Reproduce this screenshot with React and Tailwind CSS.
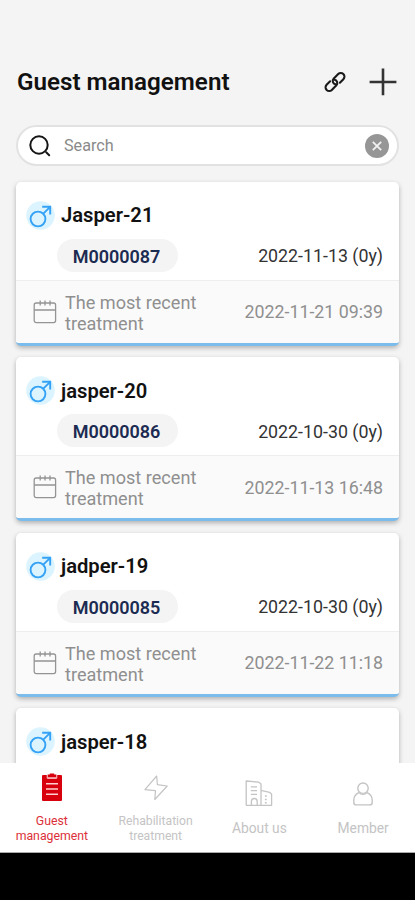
import React from "react";

const guests = [
  { name: "Jasper-21", id: "M0000087", born: "2022-11-13 (0y)", last: "2022-11-21 09:39" },
  { name: "jasper-20", id: "M0000086", born: "2022-10-30 (0y)", last: "2022-11-13 16:48" },
  { name: "jadper-19", id: "M0000085", born: "2022-10-30 (0y)", last: "2022-11-22 11:18" },
  { name: "jasper-18" },
];

function LinkIcon() {
  return (
    <svg width="24" height="24" viewBox="0 0 24 24" fill="none" stroke="#1a1a1a" strokeWidth="2.1" strokeLinecap="round">
      <path d="M12.6 14.2a3.2 3.2 0 0 1-2-5.4l4.6-4.7a3.6 3.6 0 0 1 5.2 5.1l-3.5 3.5" />
      <path d="M11.4 9.8a3.2 3.2 0 0 1 2 5.4l-4.6 4.7a3.6 3.6 0 0 1-5.2-5.1l3.5-3.5" />
    </svg>
  );
}

function PlusIcon() {
  return (
    <svg width="28" height="28" viewBox="0 0 28 28" fill="none" stroke="#333" strokeWidth="2.6">
      <path d="M14 .6v26.6M.6 14h26.8" />
    </svg>
  );
}

function SearchIcon() {
  return (
    <svg width="22" height="22" viewBox="0 0 22 22" fill="none" stroke="#151515" strokeWidth="2" strokeLinecap="round">
      <circle cx="10" cy="10" r="8.7" />
      <path d="m17.2 17.2 3 3" />
    </svg>
  );
}

function MaleIcon() {
  return (
    <svg width="29" height="29" viewBox="0 0 29 29" fill="none" stroke="#35a2f5" strokeWidth="1.9">
      <circle cx="14.5" cy="14.5" r="14.3" fill="#dbf4ff" stroke="none" />
      <circle cx="12" cy="18" r="7.4" />
      <path d="m17.3 12.7 6.6-6.6M16.2 5.8h8v7.6" />
    </svg>
  );
}

function CalendarIcon() {
  return (
    <svg width="24" height="24" viewBox="0 0 24 24" fill="none" stroke="#949494" strokeWidth="1.3">
      <rect x="1.2" y="3" width="21.4" height="19.6" rx="2" />
      <path d="M1.2 10h21.4M7.2.5v5M12 .5v5M17 .5v5" />
    </svg>
  );
}

function ClipboardIcon() {
  return (
    <svg width="20" height="28" viewBox="0 0 20 28">
      <path d="M1 2h4.5v3.4h9V2H19a1 1 0 0 1 1 1v24a1 1 0 0 1-1 1H1a1 1 0 0 1-1-1V3a1 1 0 0 1 1-1Z" fill="#d8000c" />
      <path d="M5.6 1.6h2.2V.4h4.4v1.2h2.2v3H5.6z" fill="#d8000c" />
      <path d="M5.2 2v3.2h9.6V2" fill="none" stroke="#ffc4c4" strokeWidth=".9" />
      <path d="M4 10.7h12M4 16h12M4 21.3h12" stroke="#ffd0d0" strokeWidth="1.4" />
    </svg>
  );
}

function BoltIcon() {
  return (
    <svg width="24" height="26" viewBox="0 0 24 26" fill="none" stroke="#c4c4c4" strokeWidth="1.2" strokeLinejoin="round">
      <path d="M12.7 1 .9 14.6l10.6 1.1-.7 8.8L23.2 11l-9.8-1.4Z" />
    </svg>
  );
}

function BuildingIcon() {
  return (
    <svg width="28" height="27" viewBox="0 0 28 27" fill="none" stroke="#c4c4c4" strokeWidth="1.3" strokeLinejoin="round">
      <path d="M1.2 25.3V1l12.6 1.2 2.2 1.7v21.4M16 10.3l8.6 2 2 1.9v11.1H1" />
      <path d="M5.8 6.8H12M5.8 10.6H12M5.8 14.4H12M6.4 25v-3.6a2.9 2.9 0 0 1 5.8 0V25" />
      <path d="M20.8 15.2v1.5M20.8 18.7v1.5M20.8 22.1v1.5" strokeWidth="1.8" />
    </svg>
  );
}

function MemberIcon() {
  return (
    <svg width="20" height="24" viewBox="0 0 20 24" fill="none" stroke="#c4c4c4" strokeWidth="1.4">
      <circle cx="10" cy="6.2" r="5.2" />
      <path d="M6 10.6C2.6 12 .8 14.6.8 18v2.4a2.5 2.5 0 0 0 2.5 2.5h13.4a2.5 2.5 0 0 0 2.5-2.5V18c0-3.4-1.8-6-5.2-7.4-2.2 2.4-5.8 2.4-8 0Z" />
    </svg>
  );
}

function GuestCard({ guest }) {
  return (
    <article className="flex h-[164px] shrink-0 flex-col overflow-hidden rounded-[5px] border-b-[3px] border-[#7bbcec] bg-white shadow-[0_2px_5px_rgba(0,0,0,0.28)]">
      <div className="flex h-[98px] flex-col pt-[18px]">
        <div className="flex h-[31px] items-center pl-[10px]">
          <MaleIcon />
          <span className="ml-[6px] pt-px text-[20.2px] leading-none font-semibold text-[#111]">{guest.name}</span>
        </div>
        {guest.id && (
          <div className="mt-2 flex h-[33px] items-center justify-between pr-4 pl-[41px]">
            <span className="flex h-[33px] w-[121px] items-center justify-center rounded-full bg-[#f4f4f4] pt-[2px] pr-[2px] text-[18px] font-semibold text-[#1c2b52]">
              {guest.id}
            </span>
            <span className="pt-[3px] text-[17.8px] text-[#333]">{guest.born}</span>
          </div>
        )}
      </div>
      {guest.last && (
        <div className="flex flex-1 items-center border-t border-[#eeeeee] bg-[#fafafa] pr-4 pl-[17px] text-[#8f8f8f]">
          <CalendarIcon />
          <span className="ml-2 w-[150px] pt-[2px] text-[18.1px] leading-[21px]">The most recent treatment</span>
          <span className="ml-auto pt-[2px] text-[17.8px] whitespace-nowrap">{guest.last}</span>
        </div>
      )}
    </article>
  );
}

export default function App() {
  return (
    <div className="flex h-[900px] w-[415px] flex-col overflow-hidden bg-[#f4f4f4] font-['Roboto',sans-serif]">
      <main className="flex h-[763px] shrink-0 flex-col overflow-hidden px-4 pt-[62px]">
        <header className="flex h-10 shrink-0 items-center justify-between pr-[2px] pl-px">
          <h1 className="text-[24.2px] leading-none font-semibold text-[#111]">Guest management</h1>
          <div className="flex items-center gap-[22px]">
            <LinkIcon />
            <PlusIcon />
          </div>
        </header>
        <div className="mt-[23px] flex h-[41px] shrink-0 items-center rounded-full border-2 border-[#e2e2e2] bg-white pr-2 pl-[11px]">
          <SearchIcon />
          <span className="ml-[13px] pt-[2px] text-[16.2px] text-[#8a8a8a]">Search</span>
          <span className="ml-auto flex size-6 items-center justify-center rounded-full bg-[#969696]">
            <svg width="10" height="10" viewBox="0 0 10 10" stroke="#f2f2f2" strokeWidth="1.8">
              <path d="m.8.8 8.4 8.4M9.2.8.8 9.2" />
            </svg>
          </span>
        </div>
        <section className="mt-[15.6px] flex flex-col gap-[11.5px]">
          {guests.map((guest) => (
            <GuestCard key={guest.name} guest={guest} />
          ))}
        </section>
      </main>
      <nav className="grid h-[90px] shrink-0 grid-cols-4 border-b border-[#aaa] bg-white text-center text-[#c4c4c4]">
        <div className="flex flex-col items-center pt-[10px] text-[#dc3038]">
          <ClipboardIcon />
          <span className="mt-[13px] text-[12.3px] leading-[14.5px]">Guest<br />management</span>
        </div>
        <div className="flex flex-col items-center pt-[12px]">
          <BoltIcon />
          <span className="mt-[13px] text-[12.2px] leading-[14.5px]">Rehabilitation<br />treatment</span>
        </div>
        <div className="flex flex-col items-center pt-[17px]">
          <BuildingIcon />
          <span className="mt-[13px] text-[13.8px] leading-4">About us</span>
        </div>
        <div className="flex flex-col items-center pt-[19px]">
          <MemberIcon />
          <span className="mt-[14px] text-[13.8px] leading-4">Member</span>
        </div>
      </nav>
      <div className="flex-1 bg-black" />
    </div>
  );
}
